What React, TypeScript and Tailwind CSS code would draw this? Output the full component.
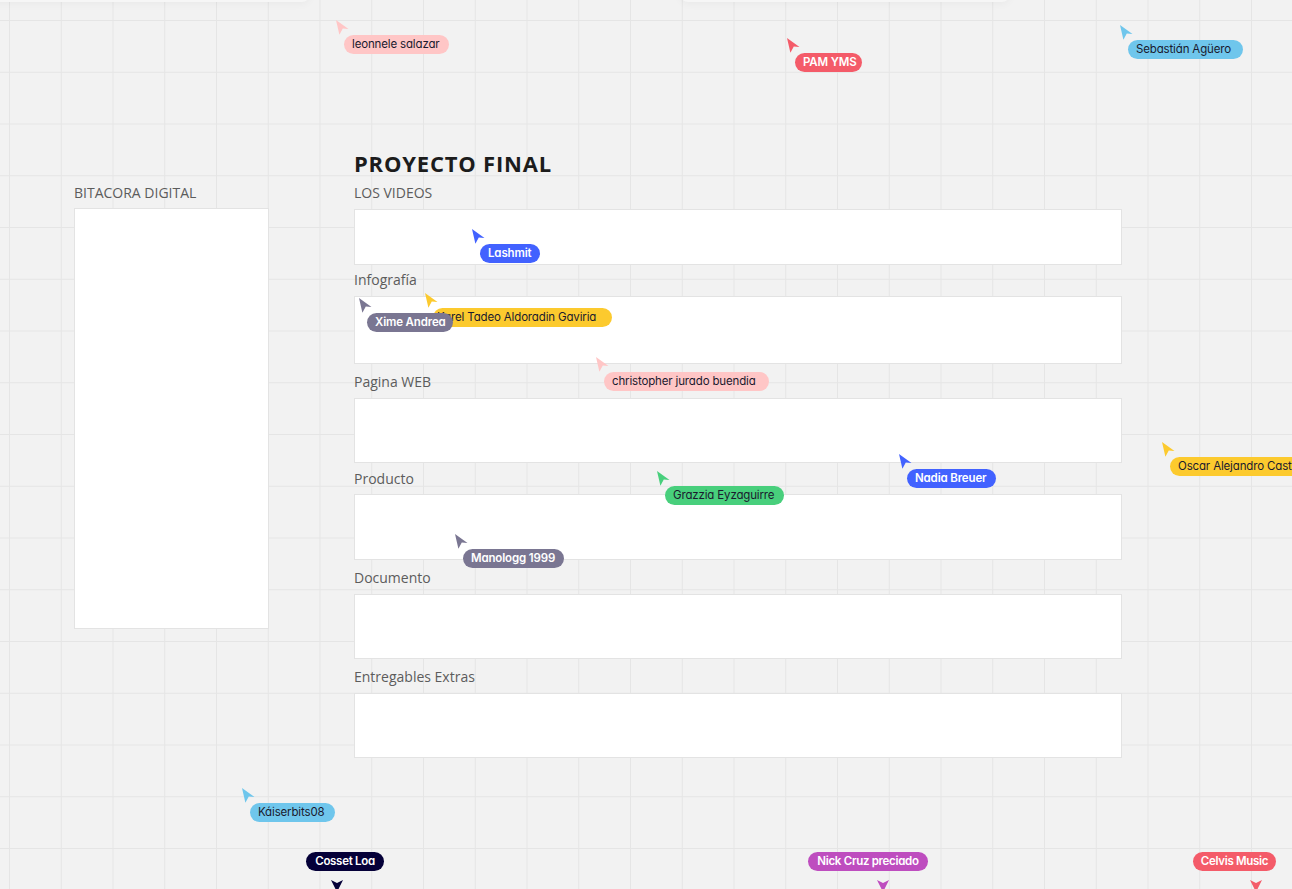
import React from "react";

type Cursor = {
  name: string;
  x: number;
  y: number;
  w: number;
  bg: string;
  arrow: string;
  text: string;
  pad?: string;
};

const cursors: Cursor[] = [
  { name: "leonnele salazar", x: 336, y: 20, w: 105, bg: "bg-[#ffc6c6]", arrow: "fill-[#ffc6c6]", text: "text-[#1a1a2e] font-normal" },
  { name: "PAM YMS", x: 787, y: 38, w: 67, bg: "bg-[#f45b69]", arrow: "fill-[#f45b69]", text: "text-white font-semibold" },
  { name: "Sebastián Agüero", x: 1120, y: 25, w: 115, bg: "bg-[#6fc6ec]", arrow: "fill-[#6fc6ec]", text: "text-[#1a1a2e] font-normal" },
  { name: "Lashmit", x: 472, y: 229, w: 60, bg: "bg-[#4262ff]", arrow: "fill-[#4262ff]", text: "text-white font-semibold" },
  { name: "Karel Tadeo Aldoradin Gaviria", x: 425, y: 293, w: 179, bg: "bg-[#fcca2e]", arrow: "fill-[#fcca2e]", text: "text-[#1a1a2e] font-normal", pad: "px-[4px]" },
  { name: "Xime Andrea", x: 359, y: 298, w: 86, bg: "bg-[#7a7692]", arrow: "fill-[#7a7692]", text: "text-white font-semibold" },
  { name: "christopher jurado buendia", x: 596, y: 357, w: 165, bg: "bg-[#ffc6c6]", arrow: "fill-[#ffc6c6]", text: "text-[#1a1a2e] font-normal" },
  { name: "Oscar Alejandro Castillo", x: 1162, y: 442, w: 160, bg: "bg-[#fcca2e]", arrow: "fill-[#fcca2e]", text: "text-[#1a1a2e] font-normal" },
  { name: "Nadia Breuer", x: 899, y: 454, w: 89, bg: "bg-[#4262ff]", arrow: "fill-[#4262ff]", text: "text-white font-semibold" },
  { name: "Grazzia Eyzaguirre", x: 657, y: 471, w: 119, bg: "bg-[#48cf7c]", arrow: "fill-[#48cf7c]", text: "text-[#1a1a2e] font-normal" },
  { name: "Manologg 1999", x: 455, y: 534, w: 101, bg: "bg-[#7a7692]", arrow: "fill-[#7a7692]", text: "text-white font-semibold" },
  { name: "Káiserbits08", x: 242, y: 788, w: 85, bg: "bg-[#6fc6ec]", arrow: "fill-[#6fc6ec]", text: "text-[#1a1a2e] font-normal" },
];

type Off = { name: string; x: number; w: number; ax: number; bg: string; arrow: string };

const offscreen: Off[] = [
  { name: "Cosset Loa", x: 306, w: 78, ax: 337, bg: "bg-[#050038]", arrow: "fill-[#050038]" },
  { name: "Nick Cruz preciado", x: 808, w: 120, ax: 883, bg: "bg-[#be4dbf]", arrow: "fill-[#be4dbf]" },
  { name: "Celvis Music", x: 1193, w: 83, ax: 1256, bg: "bg-[#f45b69]", arrow: "fill-[#f45b69]" },
];

const sections = [
  { label: "LOS VIDEOS", mt: "mt-[6px]", h: "h-[56px]", gap: "mt-[6px]" },
  { label: "Infografía", mt: "mt-[5px]", h: "h-[68px]", gap: "mt-[6px]" },
  { label: "Pagina WEB", mt: "mt-[8px]", h: "h-[65px]", gap: "mt-[6px]" },
  { label: "Producto", mt: "mt-[6px]", h: "h-[66px]", gap: "mt-[5px]" },
  { label: "Documento", mt: "mt-[8px]", h: "h-[65px]", gap: "mt-[6px]" },
  { label: "Entregables Extras", mt: "mt-[8px]", h: "h-[65px]", gap: "mt-[6px]" },
];

const pillFont = "font-['Inter','Noto_Sans',sans-serif] [font-feature-settings:'cv11']";

function CursorEl({ c }: { c: Cursor }) {
  return (
    <div className="absolute" style={{ left: c.x, top: c.y }}>
      <svg width="14" height="16" viewBox="0 0 14 16" className={`block ${c.arrow}`}>
        <path d="M0 0 L12.5 9 L6.8 8.6 L3.4 14.8 Z" />
      </svg>
      <div
        className={`absolute left-[8px] top-[15px] h-[19px] rounded-full flex items-center justify-start ${c.pad ?? "px-[8px]"} overflow-hidden whitespace-nowrap text-[11.5px] leading-none tracking-[-0.15px] ${pillFont} ${c.bg} ${c.text}`}
        style={{ width: c.w }}
      >
        {c.name}
      </div>
    </div>
  );
}

function OffEl({ o }: { o: Off }) {
  return (
    <>
      <div
        className={`absolute top-[852px] h-[19px] rounded-full flex items-center justify-center whitespace-nowrap text-[11.5px] leading-none font-semibold text-white tracking-[-0.3px] ${pillFont} ${o.bg}`}
        style={{ left: o.x, width: o.w }}
      >
        {o.name}
      </div>
      <svg
        width="12"
        height="12"
        viewBox="0 0 12 12"
        className={`absolute top-[880px] ${o.arrow}`}
        style={{ left: o.ax - 6 }}
      >
        <path d="M0 0 L6 3 L12 0 L6 12 Z" />
      </svg>
    </>
  );
}

export default function App() {
  return (
    <div className="relative w-[1292px] h-[889px] overflow-hidden bg-[#f2f2f2] [background-image:linear-gradient(to_right,#e5e5e5_1px,transparent_1px),linear-gradient(to_bottom,#e5e5e5_1px,transparent_1px)] [background-size:51.75px_51.75px] [background-position:9px_20px] font-['Open_Sans','Noto_Sans',sans-serif]">
      {/* toolbar shadows at the top edge */}
      <div className="absolute left-[-20px] top-[-46px] w-[330px] h-[48px] rounded-lg bg-[#f6f6f6] shadow-[0_2px_8px_rgba(0,0,0,0.04)]" />
      <div className="absolute left-[680px] top-[-46px] w-[330px] h-[48px] rounded-lg bg-[#f6f6f6] shadow-[0_2px_8px_rgba(0,0,0,0.04)]" />

      <div className="flex items-start pt-[149px]">
        {/* left column */}
        <div className="ml-[74px] w-[195px] mt-[34px] flex flex-col">
          <div className="h-[20px] leading-[20px] text-[14px] text-[#5c5c5c] whitespace-nowrap">BITACORA DIGITAL</div>
          <div className="mt-[5px] h-[421px] bg-white border border-[#e3e3e3]" />
        </div>

        {/* main column */}
        <div className="ml-[85px] w-[768px] flex flex-col">
          <div className="h-[28px] leading-[28px] text-[22px] font-bold text-[#1c1c1c] tracking-[0.8px]">PROYECTO FINAL</div>
          {sections.map((s) => (
            <div key={s.label} className={`${s.mt} flex flex-col`}>
              <div className="h-[20px] leading-[20px] text-[14px] text-[#5c5c5c] whitespace-nowrap">{s.label}</div>
              <div className={`${s.gap} ${s.h} bg-white border border-[#e3e3e3]`} />
            </div>
          ))}
        </div>
      </div>

      {cursors.map((c) => (
        <CursorEl key={c.name} c={c} />
      ))}
      {offscreen.map((o) => (
        <OffEl key={o.name} o={o} />
      ))}
    </div>
  );
}
